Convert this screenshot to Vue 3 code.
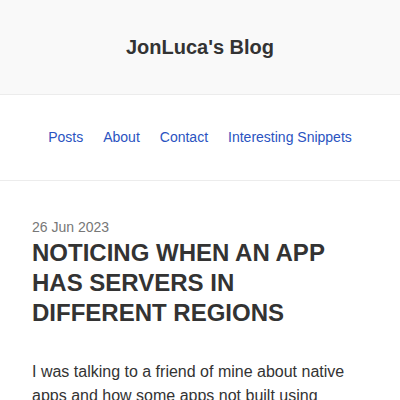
<script setup>
const links = [
  { label: 'Posts', href: '#posts' },
  { label: 'About', href: '#about' },
  { label: 'Contact', href: '#contact' },
  { label: 'Interesting Snippets', href: '#snippets' },
]
</script>

<template>
  <div class="page">
    <header class="site-header">
      <a class="site-title" href="#home">JonLuca's Blog</a>
    </header>
    <nav class="site-nav">
      <a v-for="link in links" :key="link.href" :href="link.href">{{ link.label }}</a>
    </nav>
    <main class="post">
      <time class="post-date" datetime="2023-06-26">26 Jun 2023</time>
      <h1 class="post-title">Noticing when an app has servers in different regions</h1>
      <p class="post-body">
        I was talking to a friend of mine about native apps and how some apps not built using
      </p>
    </main>
  </div>
</template>

<style>
body {
  margin: 0;
  background: #fff;
}
</style>

<style scoped>
.page {
  font-family: "Liberation Sans", Arial, sans-serif;
  color: #333;
}
.site-header {
  padding: 32px;
  background: #f9f9f9;
  border-bottom: 1px solid #ececec;
  text-align: center;
}
.site-title {
  display: block;
  font-size: 20px;
  font-weight: 700;
  line-height: 30px;
  color: #333;
  text-decoration: none;
}
.site-nav {
  display: flex;
  justify-content: center;
  gap: 20px;
  padding: 32px;
  border-bottom: 1px solid #ececec;
  font-size: 14px;
  line-height: 21px;
}
.site-nav a {
  color: #2a53c1;
  text-decoration: none;
}
.post {
  padding: 36px 32px;
}
.post-date {
  display: block;
  font-size: 14px;
  line-height: 21px;
  color: #777;
}
.post-title {
  margin: 0 0 32px;
  font-size: 24px;
  line-height: 30px;
  color: #333;
  text-transform: uppercase;
}
.post-body {
  margin: 0;
  font-size: 16px;
  line-height: 24px;
}
</style>
